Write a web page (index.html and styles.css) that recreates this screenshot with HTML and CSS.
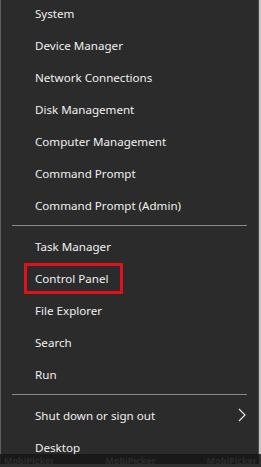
FILE: index.html
```html
<!DOCTYPE html>
<html lang="en">
<head>
    <meta charset="UTF-8">
    <meta name="viewport" content="width=device-width, initial-scale=1.0">
    <title>Quick Link Menu</title>
    <link rel="stylesheet" href="styles.css">
</head>
<body>
    <div class="screen">
        <div class="menu">
            <ul class="group">
                <li class="item">System</li>
                <li class="item">Device Manager</li>
                <li class="item">Network Connections</li>
                <li class="item">Disk Management</li>
                <li class="item">Computer Management</li>
                <li class="item">Command Prompt</li>
                <li class="item">Command Prompt (Admin)</li>
            </ul>
            <div class="separator"></div>
            <ul class="group">
                <li class="item">Task Manager</li>
                <li class="item highlighted"><span class="mark">Control Panel</span></li>
                <li class="item">File Explorer</li>
                <li class="item">Search</li>
                <li class="item">Run</li>
            </ul>
            <div class="separator"></div>
            <ul class="group">
                <li class="item has-sub">
                    <span>Shut down or sign out</span>
                    <svg class="chevron" width="8" height="14" viewBox="0 0 8 14">
                        <path d="M1 1 L7 7 L1 13" fill="none" stroke="#e6e6e6" stroke-width="1.2"/>
                    </svg>
                </li>
                <li class="item">Desktop</li>
            </ul>
        </div>
        <div class="taskbar">
            <span class="watermark">MobiPicker</span>
            <span class="watermark">MobiPicker</span>
            <span class="watermark">MobiPicker</span>
        </div>
    </div>
</body>
</html>
```

FILE: styles.css
```css
body {
    margin: 0;
    background-color: #c4c4c4;
    font-family: "Noto Sans", "Open Sans", sans-serif;
    overflow: hidden;
}
.screen {
    position: relative;
    width: 261px;
    height: 467px;
    overflow: hidden;
}
.menu {
    width: 257px;
    height: 467px;
    background-color: #2b2b2b;
    border-left: 1px solid #5e5e5e;
    border-right: 1px solid #4a4a4a;
}
.group {
    list-style: none;
    margin: 0;
    padding: 0;
}
.group:first-child {
    margin-top: -3px;
}
.item {
    height: 32px;
    display: flex;
    align-items: center;
    padding-left: 34px;
    padding-right: 12px;
    color: #f0f0f0;
    font-size: 11.6px;
    line-height: 13px;
    white-space: nowrap;
}
.has-sub {
    justify-content: space-between;
}
.chevron {
    display: block;
}
.highlighted {
    padding-left: 23px;
}
.mark {
    display: block;
    border: 3px solid #e0101c;
    border-radius: 1px;
    padding: 6px 12px 6px 8px;
}
.separator {
    height: 9px;
    display: flex;
    align-items: center;
    padding: 0 11px;
}
.separator::after {
    content: "";
    flex: 1;
    height: 1px;
    background-color: #8a8a8a;
}
/* dark taskbar strip overlapping the bottom of the menu */
.taskbar {
    position: absolute;
    left: 0;
    right: 0;
    bottom: 0;
    height: 13px;
    background-color: rgba(22, 22, 22, 0.85);
    display: flex;
    justify-content: space-between;
    align-items: center;
    padding: 0 4px;
}
.watermark {
    color: #2c2c2c;
    font-size: 9px;
    line-height: 10px;
    font-weight: bold;
}
```
